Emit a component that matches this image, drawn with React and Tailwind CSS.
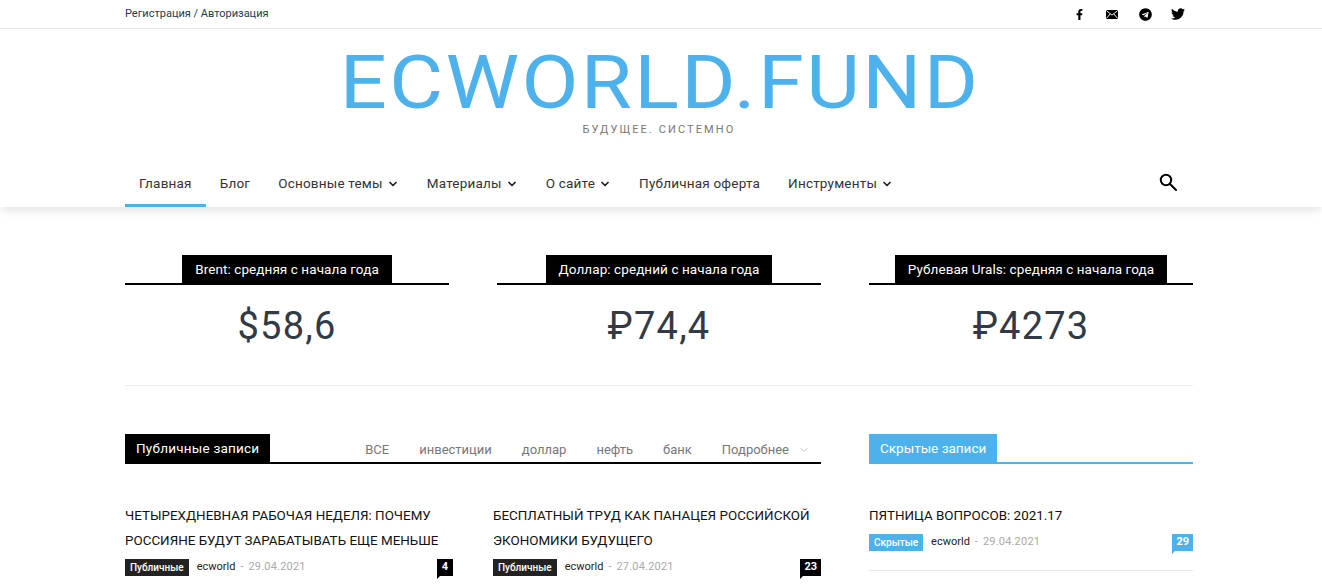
import React from "react"
import { ChevronDown } from "lucide-react"
import { FaFacebookF, FaTelegram, FaTwitter } from "react-icons/fa"

const font = { fontFamily: "Roboto, 'Noto Sans', sans-serif" }

const MailIcon = () => (
  <svg width="12" height="9" viewBox="0 0 12 9">
    <rect width="12" height="9" rx="1.5" fill="#000" />
    <path d="M0.8 1 L6 5 L11.2 1 M0.8 8 L4.2 3.8 M11.2 8 L7.8 3.8" stroke="#fff" strokeWidth="0.9" fill="none" />
  </svg>
)

const SearchIcon = () => (
  <svg width="18" height="18" viewBox="0 0 18 18" fill="none" stroke="#000" strokeWidth="2">
    <circle cx="7" cy="7" r="5.2" />
    <path d="M11 11 L17 17" strokeLinecap="round" />
  </svg>
)

const Social = ({ children }) => <div className="flex w-[14px] justify-center">{children}</div>

const NavItem = ({ label, caret, active }) => (
  <div className={`flex h-[44px] items-center gap-[4px] border-b-[3px] px-[14px] ${active ? "border-[#4db2ec]" : "border-transparent"}`}>
    <span className="text-[13.5px] tracking-[0.2px] text-[#333]">{label}</span>
    {caret && <ChevronDown size={12} strokeWidth={3.5} className="text-[#222]" />}
  </div>
)

const Stat = ({ title, value }) => (
  <div className="w-[324px]">
    <div className="flex justify-center border-b-2 border-black">
      <div className="flex h-[28px] items-center bg-black px-[13px] pt-[1px] text-[13.5px] tracking-[0.08px] text-white">{title}</div>
    </div>
    <div className="mt-[17px] text-center text-[38px] leading-[48px] tracking-[1.2px] text-[#323a45]">{value}</div>
  </div>
)

const BlockHead = ({ title, blue, children }) => (
  <div className={`flex items-start justify-between border-b-2 ${blue ? "border-[#4db2ec]" : "border-black"}`}>
    <div className={`flex h-[28px] items-center px-[11px] pt-[1px] text-[13.5px] text-white ${blue ? "bg-[#4db2ec] tracking-[0px]" : "bg-black tracking-[0.22px]"}`}>{title}</div>
    {children}
  </div>
)

const Post = ({ title, tag, date, count, blue }) => (
  <div>
    <h3 className="text-[13.4px] leading-[25px] font-normal text-[#111] uppercase">{title}</h3>
    <div className="mt-[6px] flex h-[17px] items-center text-[11px]">
      <span className={`flex h-[17px] items-center px-[5px] text-[10px] font-medium ${blue ? "bg-[#4db2ec] text-white" : "bg-[#222] text-[#fff]"}`}>{tag}</span>
      <span className="ml-[8px] text-[#222]">ecworld</span>
      <span className="mx-[5px] text-[#aaa]">-</span>
      <span className="tracking-[0.2px] text-[#aaa]">{date}</span>
      <span className={`relative ml-auto flex h-[17px] min-w-[16px] items-center justify-center px-[4px] text-[11px] font-bold text-white ${blue ? "bg-[#4db2ec]" : "bg-black"}`}>
        {count}
        <span className={`absolute top-full left-0 h-0 w-0 border-t-[3px] border-r-[3px] border-r-transparent ${blue ? "border-t-[#4db2ec]" : "border-t-black"}`} />
      </span>
    </div>
  </div>
)

const App = () => {
  return (
    <div style={font} className="h-[586px] overflow-hidden bg-white">
      {/* top bar */}
      <div className="h-[29px] border-b border-[#e4e4e4]">
        <div className="ml-[125px] flex h-[28px] w-[1068px] items-center justify-between">
          <div className="text-[11px] text-[#1a3c4e]">Регистрация / Авторизация</div>
          <div className="mr-[8px] flex items-center gap-[19px] text-black">
            <Social><FaFacebookF size={11} /></Social>
            <Social><MailIcon /></Social>
            <Social><FaTelegram size={13} /></Social>
            <Social><FaTwitter size={14} /></Social>
          </div>
        </div>
      </div>

      {/* logo */}
      <div className="ml-[125px] flex h-[134px] w-[1068px] flex-col items-center">
        <div className="mt-[17px] scale-x-[1.12] pl-[2px] text-[74px] leading-[74px] font-normal tracking-[2.1px] text-[#4db2ec]">ECWORLD.FUND</div>
        <div className="text-[11px] leading-[20px] tracking-[2.1px] text-[#777]">БУДУЩЕЕ. СИСТЕМНО</div>
      </div>

      {/* nav */}
      <div className="relative shadow-[0_5px_8px_-1px_rgba(0,0,0,0.1)]">
        <div className="ml-[125px] flex h-[44px] w-[1068px] items-center">
          <NavItem label="Главная" active />
          <NavItem label="Блог" />
          <NavItem label="Основные темы" caret />
          <NavItem label="Материалы" caret />
          <NavItem label="О сайте" caret />
          <NavItem label="Публичная оферта" />
          <NavItem label="Инструменты" caret />
          <div className="mr-[16px] mb-[6px] ml-auto"><SearchIcon /></div>
        </div>
      </div>

      <div className="ml-[125px] w-[1068px]">
        {/* stats */}
        <div className="mt-[48px] flex gap-[48px] border-b border-[#ededed] pb-[35px]">
          <Stat title="Brent: средняя с начала года" value="$58,6" />
          <Stat title="Доллар: средний с начала года" value="₽74,4" />
          <Stat title="Рублевая Urals: средняя с начала года" value="₽4273" />
        </div>

        <div className="mt-[48px] flex gap-[48px]">
          {/* public */}
          <div className="w-[696px]">
            <BlockHead title="Публичные записи">
              <div className="flex items-center gap-[30px] pt-[6px] text-[13px] text-[#777]">
                <span>ВСЕ</span>
                <span>инвестиции</span>
                <span>доллар</span>
                <span>нефть</span>
                <span>банк</span>
                <span className="flex items-center gap-[9px]">Подробнее <ChevronDown size={12} strokeWidth={1} className="mr-[11px] text-[#888]" /></span>
              </div>
            </BlockHead>
            <div className="mt-[39px] flex gap-[40px]">
              <div className="w-[328px]">
                <Post title="Четырехдневная рабочая неделя: почему россияне будут зарабатывать еще меньше" tag="Публичные" date="29.04.2021" count="4" />
              </div>
              <div className="w-[328px]">
                <Post title="Бесплатный труд как панацея российской экономики будущего" tag="Публичные" date="27.04.2021" count="23" />
              </div>
            </div>
          </div>

          {/* hidden */}
          <div className="w-[324px]">
            <BlockHead title="Скрытые записи" blue />
            <div className="mt-[39px] border-b border-[#e8e8e8] pb-[19px]">
              <Post title="Пятница вопросов: 2021.17" tag="Скрытые" date="29.04.2021" count="29" blue />
            </div>
          </div>
        </div>
      </div>
    </div>
  )
}

export default App
